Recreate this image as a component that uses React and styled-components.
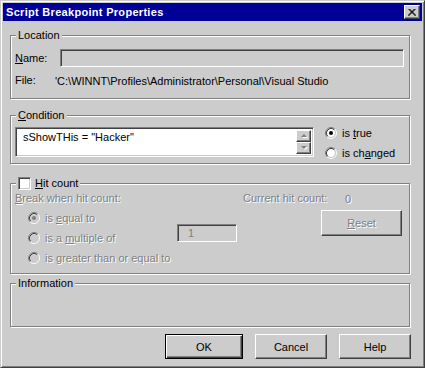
import React from 'react'
import styled, { createGlobalStyle } from 'styled-components'

const FACE = '#cccccc'
const SHADOW = '#808080'
const DARK = '#404040'

const Global = createGlobalStyle`
  body {
    margin: 0;
    background: ${FACE};
    font-family: "Liberation Sans", Arial, sans-serif;
    font-size: 11px;
    color: #000;
  }
  * { box-sizing: border-box; }
`

const Window = styled.div`
  width: 425px;
  height: 368px;
  padding: 2px;
  background: ${FACE};
  border: 1px solid;
  border-color: ${FACE} ${DARK} ${DARK} ${FACE};
  box-shadow: inset 1px 1px #fff, inset -1px -1px ${SHADOW};
  display: flex;
  flex-direction: column;
`

const TitleBar = styled.div`
  height: 18px;
  background: #000099;
  color: #fff;
  font-weight: bold;
  font-size: 11px;
  letter-spacing: 0.3px;
  display: flex;
  align-items: center;
  justify-content: space-between;
  padding: 0 2px 0 3px;
`

const Raised = `
  background: ${FACE};
  border: 1px solid;
  border-color: #fff ${DARK} ${DARK} #fff;
  box-shadow: inset -1px -1px ${SHADOW};
`

const CloseBtn = styled.div`
  ${Raised}
  width: 16px;
  height: 14px;
  display: flex;
  align-items: center;
  justify-content: center;
`

const Body = styled.div`
  padding: 0 12px 0 7px;
  display: flex;
  flex-direction: column;
`

const Group = styled.div`
  position: relative;
  margin-top: ${p => p.$top}px;
  height: ${p => p.$h}px;
  border: 1px solid ${SHADOW};
  box-shadow: inset 1px 1px #fff, 1px 1px #fff;
  padding: ${p => p.$pad || '0'};
`

const Caption = styled.div`
  position: absolute;
  top: -7px;
  left: 5px;
  padding: 0 2px;
  background: ${FACE};
  line-height: 13px;
  display: flex;
  align-items: center;
  gap: 4px;
`

const Row = styled.div`
  display: flex;
  align-items: center;
  margin-top: ${p => p.$mt || 0}px;
`

const Label = styled.div`
  width: ${p => (p.$w ? `${p.$w}px` : 'auto')};
  flex: none;
  line-height: 13px;
`

const Sunken = `
  border: 1px solid;
  border-color: ${SHADOW} #fff #fff ${SHADOW};
  box-shadow: inset 1px 1px ${DARK}, inset -1px -1px ${FACE};
`

const Field = styled.div`
  ${Sunken}
  background: ${p => (p.$white ? '#fff' : FACE)};
  width: ${p => (p.$w ? `${p.$w}px` : 'auto')};
  flex: ${p => (p.$w ? 'none' : '1')};
  height: 18px;
  margin-top: ${p => p.$mt || 0}px;
  color: ${SHADOW};
  line-height: 14px;
  padding: 1px 0 0 10px;
`

const CondRow = styled.div`
  display: flex;
  align-items: flex-start;
  gap: 11px;
`

const TextArea = styled.div`
  ${Sunken}
  background: #fff;
  width: 299px;
  height: 30px;
  margin-top: 4px;
  display: flex;
  justify-content: space-between;
  padding: 2px;
`

const AreaText = styled.div`
  padding: 1px 0 0 5px;
  line-height: 13px;
`

const ScrollBar = styled.div`
  display: flex;
  flex-direction: column;
  width: 15px;
`

const ScrollBtn = styled.div`
  ${Raised}
  height: 13px;
  display: flex;
  align-items: center;
  justify-content: center;
`

const RadioList = styled.div`
  display: flex;
  flex-direction: column;
  margin-left: ${p => p.$ml || 0}px;
`

const RadioItem = styled.div`
  height: 20px;
  display: flex;
  align-items: center;
  gap: 5px;
  line-height: 13px;
`

const Dim = styled.span`
  color: ${SHADOW};
  text-shadow: 1px 1px #fff;
`

const Check = styled.div`
  ${Sunken}
  width: 13px;
  height: 13px;
  background: #fff;
`

const HitGrid = styled.div`
  display: grid;
  grid-template-columns: 228px 1fr;
`

const OptGrid = styled.div`
  display: grid;
  grid-template-columns: 162px 60px;
  align-items: start;
  margin-top: 3px;
`

const Button = styled.div`
  ${Raised}
  width: ${p => p.$w}px;
  height: ${p => p.$h || 25}px;
  display: flex;
  align-items: center;
  justify-content: center;
  margin-left: ${p => p.$ml || 0}px;
  margin-top: ${p => p.$mt || 0}px;
  ${p => p.$default && `
    border: 1px solid #000;
    box-shadow: inset 1px 1px #fff, inset -1px -1px ${DARK}, inset -2px -2px ${SHADOW};
  `}
`

const ButtonRow = styled.div`
  display: flex;
  justify-content: flex-end;
  gap: 12px;
  margin-top: 7px;
  margin-right: -1px;
`

const Radio = ({ checked, disabled }) => (
  <svg width="12" height="12" viewBox="0 0 12 12" style={{ flex: 'none' }}>
    <circle cx="6" cy="6" r="4" fill={disabled ? FACE : '#fff'} />
    <path d="M2.11 9.89 A5.5 5.5 0 0 1 9.89 2.11" stroke={SHADOW} fill="none" />
    <path d="M9.89 2.11 A5.5 5.5 0 0 1 2.11 9.89" stroke="#fff" fill="none" />
    <path d="M2.82 9.18 A4.5 4.5 0 0 1 9.18 2.82" stroke={DARK} fill="none" />
    <path d="M9.18 2.82 A4.5 4.5 0 0 1 2.82 9.18" stroke={FACE} fill="none" />
    {checked && <circle cx="6" cy="6" r="2" fill={disabled ? SHADOW : '#000'} />}
  </svg>
)

const Arrow = ({ up }) => (
  <svg width="8" height="5" viewBox="0 0 8 5">
    <path d={up ? 'M2 4 L5 1 L8 4 Z' : 'M2 1 L8 1 L5 4 Z'} fill="#fff" />
    <path d={up ? 'M1 3 L4 0 L7 3 Z' : 'M1 0 L7 0 L4 3 Z'} fill={SHADOW} />
  </svg>
)

export default function App() {
  return (
    <>
      <Global />
      <Window>
        <TitleBar>
          <span>Script Breakpoint Properties</span>
          <CloseBtn>
            <svg width="8" height="7" viewBox="0 0 8 7">
              <path d="M0.5 0 L7.5 7 M7.5 0 L0.5 7 M1.5 0 L8 6.5 M6.5 0 L0 6.5" stroke="#000" strokeWidth="1" />
            </svg>
          </CloseBtn>
        </TitleBar>
        <Body>
          <Group $top={14} $h={64} $pad="13px 5px 0 4px">
            <Caption>Location</Caption>
            <Row>
              <Label $w={45}><u>N</u>ame:</Label>
              <Field />
            </Row>
            <Row $mt={7}>
              <Label $w={40}>File:</Label>
              <span>'C:\WINNT\Profiles\Administrator\Personal\Visual Studio</span>
            </Row>
          </Group>

          <Group $top={16} $h={49} $pad="7px 0 0 4px">
            <Caption><span><u>C</u>ondition</span></Caption>
            <CondRow>
              <TextArea>
                <AreaText>sShowTHis = "Hacker"</AreaText>
                <ScrollBar>
                  <ScrollBtn><Arrow up /></ScrollBtn>
                  <ScrollBtn><Arrow /></ScrollBtn>
                </ScrollBar>
              </TextArea>
              <RadioList>
                <RadioItem><Radio checked /><span>is <u>t</u>rue</span></RadioItem>
                <RadioItem><Radio /><span>is ch<u>a</u>nged</span></RadioItem>
              </RadioList>
            </CondRow>
          </Group>

          <Group $top={19} $h={91} $pad="8px 0 0 4px">
            <Caption>
              <Check />
              <span><u>H</u>it count</span>
            </Caption>
            <HitGrid>
              <div>
                <Label><Dim><u>B</u>reak when hit count:</Dim></Label>
                <OptGrid>
                  <RadioList $ml={13}>
                    <RadioItem><Radio checked disabled /><Dim>is <u>e</u>qual to</Dim></RadioItem>
                    <RadioItem><Radio disabled /><Dim>is a <u>m</u>ultiple of</Dim></RadioItem>
                    <RadioItem><Radio disabled /><Dim>is <u>g</u>reater than or equal to</Dim></RadioItem>
                  </RadioList>
                  <Field $w={60} $mt={16}>1</Field>
                </OptGrid>
              </div>
              <div>
                <Row>
                  <Label $w={102}><Dim>Current hit count:</Dim></Label>
                  <Dim>0</Dim>
                </Row>
                <Button $w={81} $h={26} $ml={78} $mt={5}><Dim><u>R</u>eset</Dim></Button>
              </div>
            </HitGrid>
          </Group>

          <Group $top={9} $h={44}>
            <Caption>Information</Caption>
          </Group>

          <ButtonRow>
            <Button $w={78} $default>OK</Button>
            <Button $w={72}>Cancel</Button>
            <Button $w={72}>Help</Button>
          </ButtonRow>
        </Body>
      </Window>
    </>
  )
}
